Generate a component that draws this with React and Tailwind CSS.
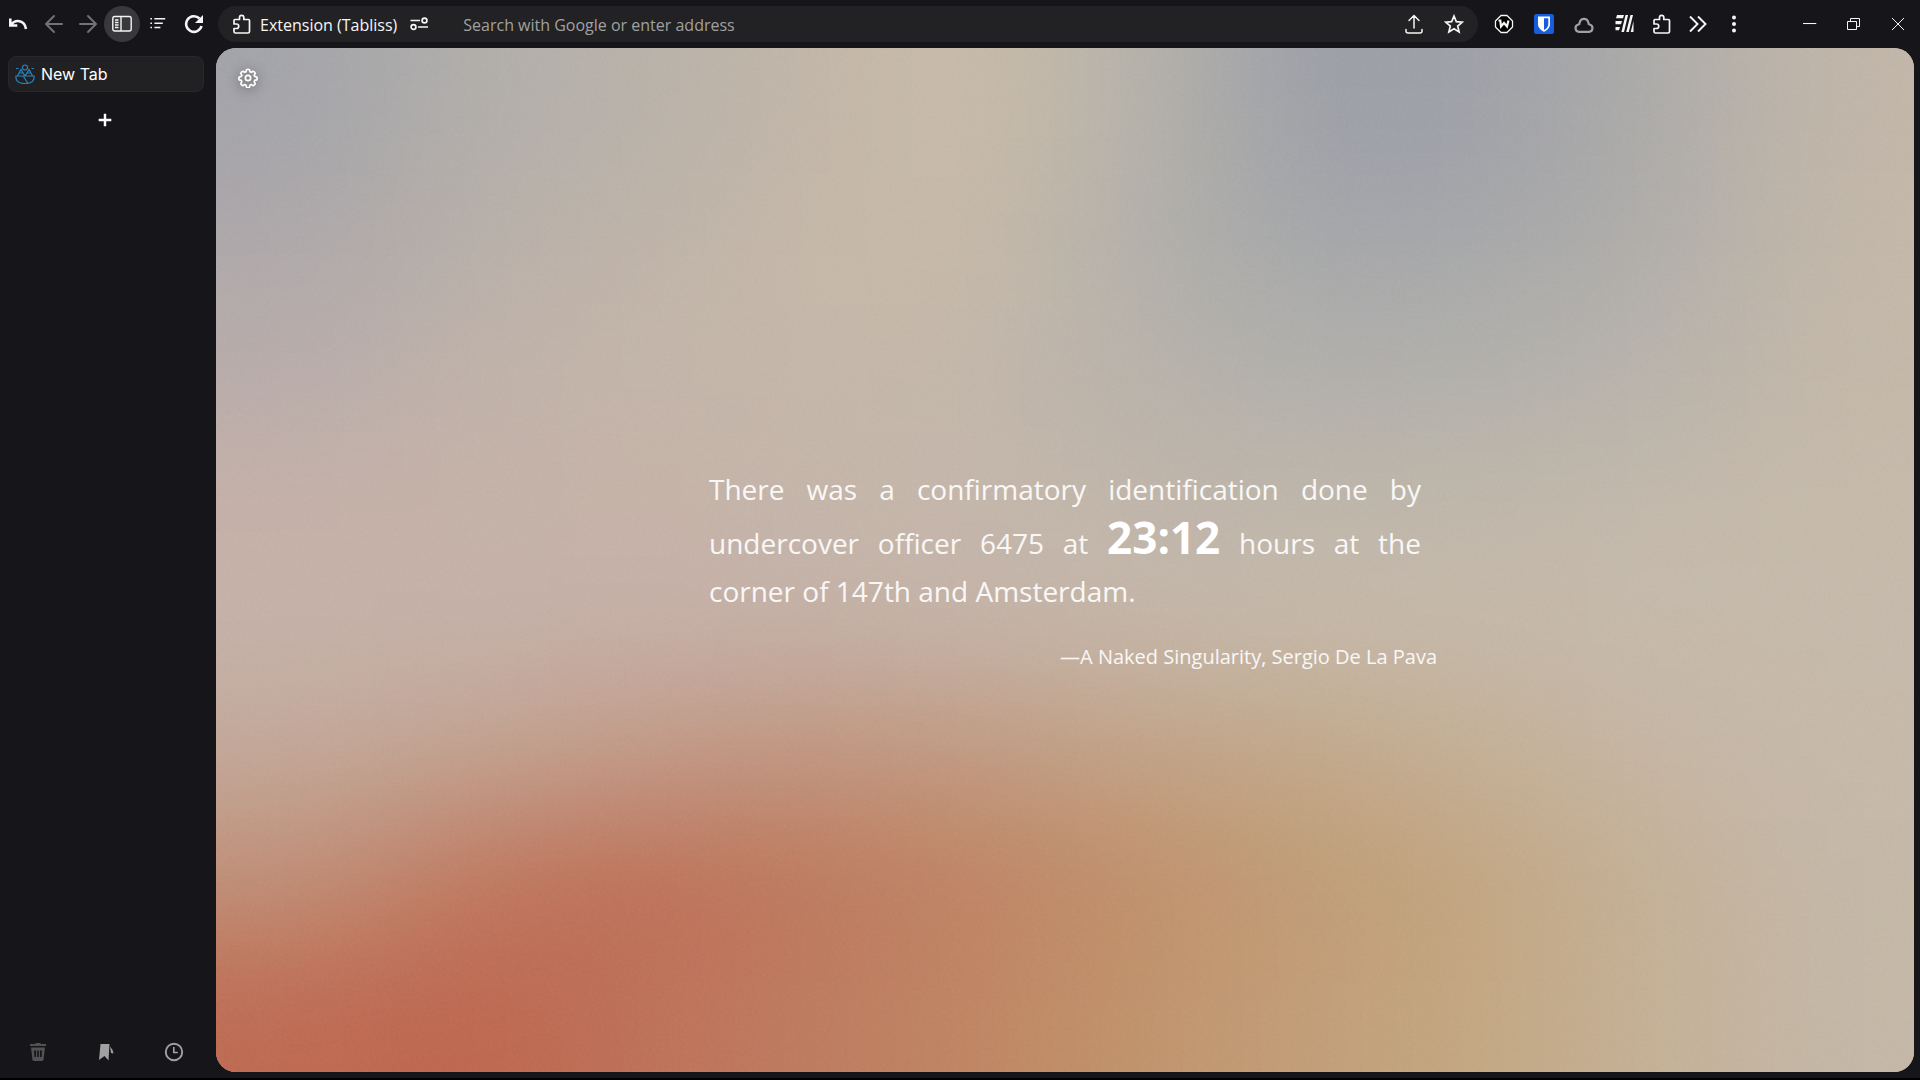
import React from "react";

const COLS = 10;
const MESH = [
  ["#a3a4aa", "#b2afab", "#b9b2a9", "#c3b7a9", "#cabca9", "#b5b2aa", "#9b9ea8", "#9fa1a8", "#adacaa", "#c3b7a9"],
  ["#aea8aa", "#b8b0a9", "#c0b4a9", "#c6b8a9", "#c8baa9", "#b2b0aa", "#a4a6aa", "#a7a8aa", "#b1aeaa", "#c4b8a9"],
  ["#b8acaa", "#c0b2a9", "#c4b5a9", "#c5b7a9", "#c4b7aa", "#b7b2aa", "#b0afab", "#b1b0ab", "#b9b3ab", "#c4b8a9"],
  ["#c5b0a8", "#c5b2a8", "#c6b3a8", "#c5b5a9", "#c5b7aa", "#c0b5aa", "#beb6aa", "#c0b7aa", "#c3b9ab", "#c6baaa"],
  ["#c6b2a9", "#c6b1a9", "#c6b0a8", "#c5b1a8", "#c5b4a9", "#c5b7aa", "#c6b9aa", "#c6b9aa", "#c6baab", "#c6baab"],
  ["#c3a899", "#c2a38f", "#c29a86", "#c1957e", "#c19a80", "#c2a285", "#c2a888", "#c5b096", "#c6b6a4", "#c6b9aa"],
  ["#c08f76", "#c0765d", "#be6d54", "#be785b", "#c08261", "#c19069", "#c19c75", "#c3a680", "#c5b198", "#c5b8a7"],
  ["#bf6950", "#be644b", "#be7056", "#be7a5d", "#c08561", "#c1946b", "#c29e77", "#c4a882", "#c5b197", "#c5b8a7"],
];

function Wallpaper() {
  return (
    <svg className="absolute inset-0 h-full w-full" viewBox="0 0 1700 1024" preserveAspectRatio="none" aria-hidden="true">
      <defs>
        <filter id="soften" filterUnits="userSpaceOnUse" x="-400" y="-400" width="2500" height="1824" colorInterpolationFilters="sRGB">
          <feGaussianBlur stdDeviation="82 60" />
        </filter>
        <filter id="grain" x="0" y="0" width="100%" height="100%">
          <feTurbulence type="fractalNoise" baseFrequency="0.35" numOctaves="2" seed="4" />
          <feColorMatrix type="saturate" values="0.3" />
        </filter>
      </defs>
      <g filter="url(#soften)">
        {MESH.map((row, r) =>
          row.map((color, c) => {
            const left = c === 0 ? -300 : c * 170;
            const right = c === COLS - 1 ? 2000 : (c + 1) * 170 + 1;
            const top = r === 0 ? -300 : r * 128;
            const bottom = r === MESH.length - 1 ? 1324 : (r + 1) * 128 + 1;
            return <rect key={`${r}-${c}`} x={left} y={top} width={right - left} height={bottom - top} fill={color} />;
          })
        )}
      </g>
      <rect width="1700" height="1024" filter="url(#grain)" opacity="0.07" />
    </svg>
  );
}

function Icon({ size = 20, children, ...rest }) {
  return (
    <svg width={size} height={size} viewBox="0 0 20 20" fill="none" stroke="currentColor" strokeWidth="1.5" aria-hidden="true" {...rest}>
      {children}
    </svg>
  );
}

const Undo = () => (
  <Icon strokeWidth="2.6">
    <path d="M2.300 4.500V11.500h7M3 11C7 5 16.500 5.500 18 15" />
  </Icon>
);
const Back = () => (
  <Icon strokeWidth="1.9" strokeLinecap="round" strokeLinejoin="round">
    <path d="M18 10H2.500M10 2L2 10l8 8" />
  </Icon>
);
const Forward = () => (
  <Icon strokeWidth="1.9" strokeLinecap="round" strokeLinejoin="round">
    <path d="M2 10h15.500M10 2l8 8-8 8" />
  </Icon>
);
const Sidebar = () => (
  <Icon strokeWidth="1.4">
    <rect x="0.800" y="2.500" width="18.400" height="14.500" rx="2" />
    <path d="M9 2.500V17M3 6h3.500M3 8.500h3.500M3 11h3.500M3 13.500h3.500" />
  </Icon>
);
const ListLines = () => (
  <Icon size={16} strokeWidth="1.900">
    <path d="M5.500 3.500H19M5.500 9H16M5.500 14.500H13" />
    <path d="M0.500 3.500h2M0.500 9h2M0.500 14.500h2" />
  </Icon>
);
const Reload = () => (
  <Icon strokeWidth="2.600">
    <path d="M17.500 12A7.800 7.800 0 1 1 15.500 4.500" />
    <path d="M19 1v8h-8z" fill="currentColor" stroke="none" />
  </Icon>
);
const Puzzle = () => (
  <Icon strokeWidth="1.700" strokeLinejoin="round">
    <path d="M2 6.500Q2 5.500 3 5.500H7.500V3.500a2 2 0 0 1 4.300 0V5.500H16.500q1 0 1 1V17.500q0 1.500-1.500 1.500H3.500Q2 19 2 17.500V14.500H4.500a2.200 2.200 0 0 0 0-4.500H2z" />
  </Icon>
);
const Sliders = () => (
  <Icon strokeWidth="1.700">
    <circle cx="15.500" cy="6.500" r="2.400" />
    <circle cx="4.500" cy="13" r="2.400" />
    <path d="M1.500 6.500h9.500M9 13h10" />
  </Icon>
);
const Share = () => (
  <Icon strokeLinecap="round" strokeLinejoin="round">
    <path d="M10 14V2M5 6.500L10 1.500l5 5M2 15.500V17q0 2 2 2h12q2 0 2-2v-1.500" />
  </Icon>
);
const Star = () => (
  <Icon strokeWidth="1.700">
    <path d="M10 2l2.300 5.600 6 .5-4.600 3.900 1.400 5.900L10 14.700l-5.100 3.200 1.400-5.900L1.700 8.100l6-.5z" />
  </Icon>
);
const MarkW = () => (
  <Icon>
    <path d="M7 1.500h6l5.500 5.500v6L13 18.500H7L1.500 13V7z" fill="#000" strokeWidth="1.300" strokeLinejoin="round" />
    <path d="M4.500 6.500h1.800L7 12.500 10 9l3 3.500L14.500 6.500" strokeWidth="2.200" />
  </Icon>
);
const Shield = () => (
  <Icon stroke="none">
    <rect width="20" height="20" rx="2.500" fill="#175ddc" />
    <path d="M4 2.500h12V10c0 4-3 6.300-6 7.800C7 16.300 4 14 4 10z" fill="#fff" />
    <path d="M10 4.300h4.300V10c0 3-2 4.700-4.300 6z" fill="#175ddc" />
  </Icon>
);
const Cloud = () => (
  <Icon strokeWidth="2.200">
    <path d="M5 17.800a3.700 3.700 0 0 1-.6-7.300q1.300-.3 1.200-1.800a4.500 4.800 0 0 1 8.800 0q-.1 1.500 1.200 1.800a3.700 3.700 0 0 1-.6 7.300z" />
  </Icon>
);
const Stripes = () => (
  <Icon stroke="none" fill="currentColor">
    <path d="M3 1h7L9 4.300H2zM1.500 7H8l-1 3.300H1.500zM1.500 13H6l-1 3.300H1.500zM11.500 1h2.600L10 18H7.400zM16.500 1H19l-4.200 17h-2.600zM19.500 7v11h-2.800z" />
  </Icon>
);
const Chevrons = () => (
  <Icon strokeWidth="1.900">
    <path d="M2 2.500L9.500 10 2 17.500M10 2.500l7.500 7.500-7.500 7.500" />
  </Icon>
);
const Dots = () => (
  <Icon stroke="none" fill="currentColor">
    <circle cx="10" cy="3.500" r="2" />
    <circle cx="10" cy="10" r="2" />
    <circle cx="10" cy="16.500" r="2" />
  </Icon>
);
const Minimize = () => (
  <Icon size={14} strokeWidth="1.500">
    <path d="M0 9.300h19" />
  </Icon>
);
const Restore = () => (
  <svg width="14" height="14" viewBox="0 0 14 14" fill="none" stroke="currentColor" aria-hidden="true">
    <path d="M0.500 4.500h9V12.500H0.500zM3.500 4.500V1.500h9v8H9.500" />
  </svg>
);
const Close = () => (
  <svg width="14" height="14" viewBox="0 0 14 14" fill="none" stroke="currentColor" aria-hidden="true">
    <path d="M1 1l12 12M13 1L1 13" />
  </svg>
);
const Favicon = () => (
  <Icon stroke="#2b83bd" strokeWidth="1.200">
    <circle cx="10" cy="3.500" r="2.500" />
    <path d="M1 12q-1 7.500 9 7.500t9-7.500zM2.500 12L6 5.500l4 6.500M10 12l4-6.500 3.500 6.500M8.500 12.500l4.500 7M4.500 9h3M12.500 9h3M1 4.500h2.500M16.500 4.500H19" />
  </Icon>
);
const Gear = () => (
  <svg width="20" height="20" viewBox="0 0 24 24" fill="none" stroke="currentColor" strokeWidth="2" strokeLinecap="round" strokeLinejoin="round" aria-hidden="true">
    <circle cx="12" cy="12" r="3.200" />
    <path d="M10.200 2q1.800-1 3.600 0l.6 2.500 1.500.7 2.300-1.300q1.900.6 2.500 2.500l-1.300 2.200.6 1.500 2.600.7q.8 1.700 0 3.400l-2.500.7-.7 1.500 1.300 2.300q-.6 1.900-2.500 2.500l-2.300-1.300-1.500.6-.6 2.500q-1.800 1-3.600 0l-.6-2.500-1.500-.6-2.300 1.300q-1.900-.6-2.500-2.500l1.300-2.300-.7-1.500-2.500-.7q-.8-1.700 0-3.400l2.600-.7.6-1.500-1.300-2.200q.6-1.900 2.500-2.500l2.300 1.300 1.500-.7z" />
  </svg>
);
const Trash = () => (
  <Icon stroke="none" fill="currentColor">
    <path d="M2 2h5l1-1h4l1 1h5v2H2z" />
    <path fillRule="evenodd" d="M3 5.500h14L15.500 18q-.2 1-1.500 1H6q-1.300 0-1.500-1zM6 8.500l.5 6.500h1.500V8.500zM9.200 8.500v6.500h1.600V8.500zM12 8.500v6.500h1.500l.5-6.500z" />
  </Icon>
);
const Bookmark = () => (
  <Icon stroke="none" fill="currentColor">
    <path d="M4.500 2H13.500L12.500 18.500 8.500 14 3 18z" />
    <path d="M14 4.500q3 3 3.500 7l-2.500-.5z" />
  </Icon>
);
const Clock = () => (
  <Icon strokeWidth="1.900">
    <circle cx="10" cy="10" r="8.200" />
    <path d="M9.800 5v5.500h4" strokeWidth="1.600" />
  </Icon>
);

function IconButton({ label, className = "text-neutral-100", children }) {
  return (
    <button type="button" aria-label={label} className={`flex shrink-0 items-center justify-center ${className}`}>
      {children}
    </button>
  );
}

export default function App() {
  return (
    <div className="flex h-screen flex-col border-b-2 border-black bg-[#16151a] font-['Open_Sans','Noto_Sans',sans-serif] text-neutral-100">
      <header className="flex h-12 shrink-0 items-center">
        <nav aria-label="Navigation" className="flex shrink-0 items-center">
          <IconButton label="Undo close tab" className="h-9 w-9"><Undo /></IconButton>
          <IconButton label="Back" className="h-9 w-9 text-neutral-500"><Back /></IconButton>
          <IconButton label="Forward" className="h-9 w-8 text-neutral-500"><Forward /></IconButton>
          <IconButton label="Toggle sidebar" className="h-9 w-9 rounded-full bg-[#39383d]"><Sidebar /></IconButton>
          <IconButton label="Tab list" className="h-9 w-9"><ListLines /></IconButton>
          <IconButton label="Reload" className="h-9 w-9"><Reload /></IconButton>
        </nav>
        <div className="ml-1.5 flex h-9 min-w-0 flex-1 items-center rounded-full bg-[#222224] px-3.5">
          <button type="button" className="flex shrink-0 items-center gap-2 text-base">
            <Puzzle />
            <span className="pt-0.5 whitespace-nowrap">Extension (Tabliss)</span>
          </button>
          <IconButton label="Site permissions" className="ml-3"><Sliders /></IconButton>
          <input
            type="text"
            aria-label="Address"
            placeholder="Search with Google or enter address"
            className="ml-8.5 min-w-0 flex-1 bg-transparent pt-0.5 text-base outline-none placeholder:text-neutral-400"
          />
          <div className="flex gap-5">
            <IconButton label="Share"><Share /></IconButton>
            <IconButton label="Bookmark this page"><Star /></IconButton>
          </div>
        </div>
        <div className="ml-4 flex shrink-0 items-center gap-5">
          <IconButton label="W extension"><MarkW /></IconButton>
          <IconButton label="Password manager"><Shield /></IconButton>
          <IconButton label="Cloud" className="text-neutral-400"><Cloud /></IconButton>
          <IconButton label="Stripes"><Stripes /></IconButton>
        </div>
        <div className="ml-4.5 flex shrink-0 items-center gap-4">
          <IconButton label="Extensions"><Puzzle /></IconButton>
          <IconButton label="More tools"><Chevrons /></IconButton>
          <IconButton label="Menu"><Dots /></IconButton>
        </div>
        <div className="ml-11 flex shrink-0">
          <IconButton label="Minimize" className="h-9 w-11"><Minimize /></IconButton>
          <IconButton label="Restore" className="h-9 w-11"><Restore /></IconButton>
          <IconButton label="Close" className="h-9 w-11"><Close /></IconButton>
        </div>
      </header>

      <div className="flex min-h-0 flex-1">
        <aside className="flex w-54 shrink-0 flex-col pt-2">
          <button type="button" className="mr-3 ml-2 flex h-9 items-center gap-1.5 rounded-lg border border-[#28282a] bg-[#212123] px-1.5 font-['Inter',sans-serif] text-base text-white">
            <Favicon />
            New Tab
          </button>
          <IconButton label="Open a new tab" className="mt-4 mr-1.5 h-6 text-white">
            <Icon size={14} strokeWidth="3.500"><path d="M10 1v18M1 10h18" /></Icon>
          </IconButton>
          <div className="mt-auto flex justify-between pr-8 pb-4 pl-7">
            <IconButton label="Clear tabs" className="text-neutral-600"><Trash /></IconButton>
            <IconButton label="Bookmarks" className="text-neutral-400"><Bookmark /></IconButton>
            <IconButton label="History" className="text-neutral-400"><Clock /></IconButton>
          </div>
        </aside>

        <main className="relative mr-1.5 mb-1.5 flex min-w-0 flex-1 items-center justify-center overflow-hidden rounded-[20px] bg-[#c6b9aa]">
          <Wallpaper />
          <button type="button" aria-label="Settings" className="absolute top-5 left-5.5 text-white drop-shadow-[0_2px_6px_rgba(0,0,0,0.5)]">
            <Gear />
          </button>
          <figure className="relative w-[744px] max-w-full pt-4 text-white">
            <blockquote className="px-4 text-justify text-[28px] leading-12 text-white/90">
              There was a confirmatory identification done by undercover officer 6475 at{" "}
              <time className="text-[44px] leading-12 font-bold text-white">23:12</time> hours at the corner of 147th and Amsterdam.
            </blockquote>
            <figcaption className="mt-7 text-right text-xl text-white/90">—A Naked Singularity, Sergio De La Pava</figcaption>
          </figure>
        </main>
      </div>
    </div>
  );
}
